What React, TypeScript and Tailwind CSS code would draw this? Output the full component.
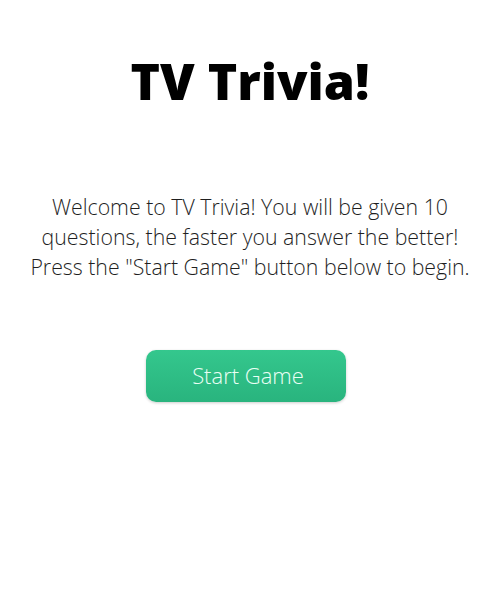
export default function App() {
  return (
    <div className="flex min-h-[600px] w-full flex-col items-center bg-white font-['Open_Sans',sans-serif]">
      <h1 className="mt-[45px] text-[50px] font-extrabold leading-[72px] text-black">TV Trivia!</h1>
      <p className="mt-[75px] w-[448px] text-center text-[21.3px] font-light leading-[30px] text-[#1f1f1f]">
        Welcome to TV Trivia! You will be given 10 questions, the faster you answer the better! Press the "Start
        Game" button below to begin.
      </p>
      <button
        type="button"
        className="mr-[9px] mt-[68px] h-[52px] w-[200px] rounded-[10px] bg-gradient-to-b from-[#34c78d] to-[#29b47e] pb-[2px] pl-[5px] text-[22px] font-light text-[#eafff5] shadow-[0_1px_3px_rgba(0,0,0,0.2)]"
      >
        Start Game
      </button>
    </div>
  );
}
